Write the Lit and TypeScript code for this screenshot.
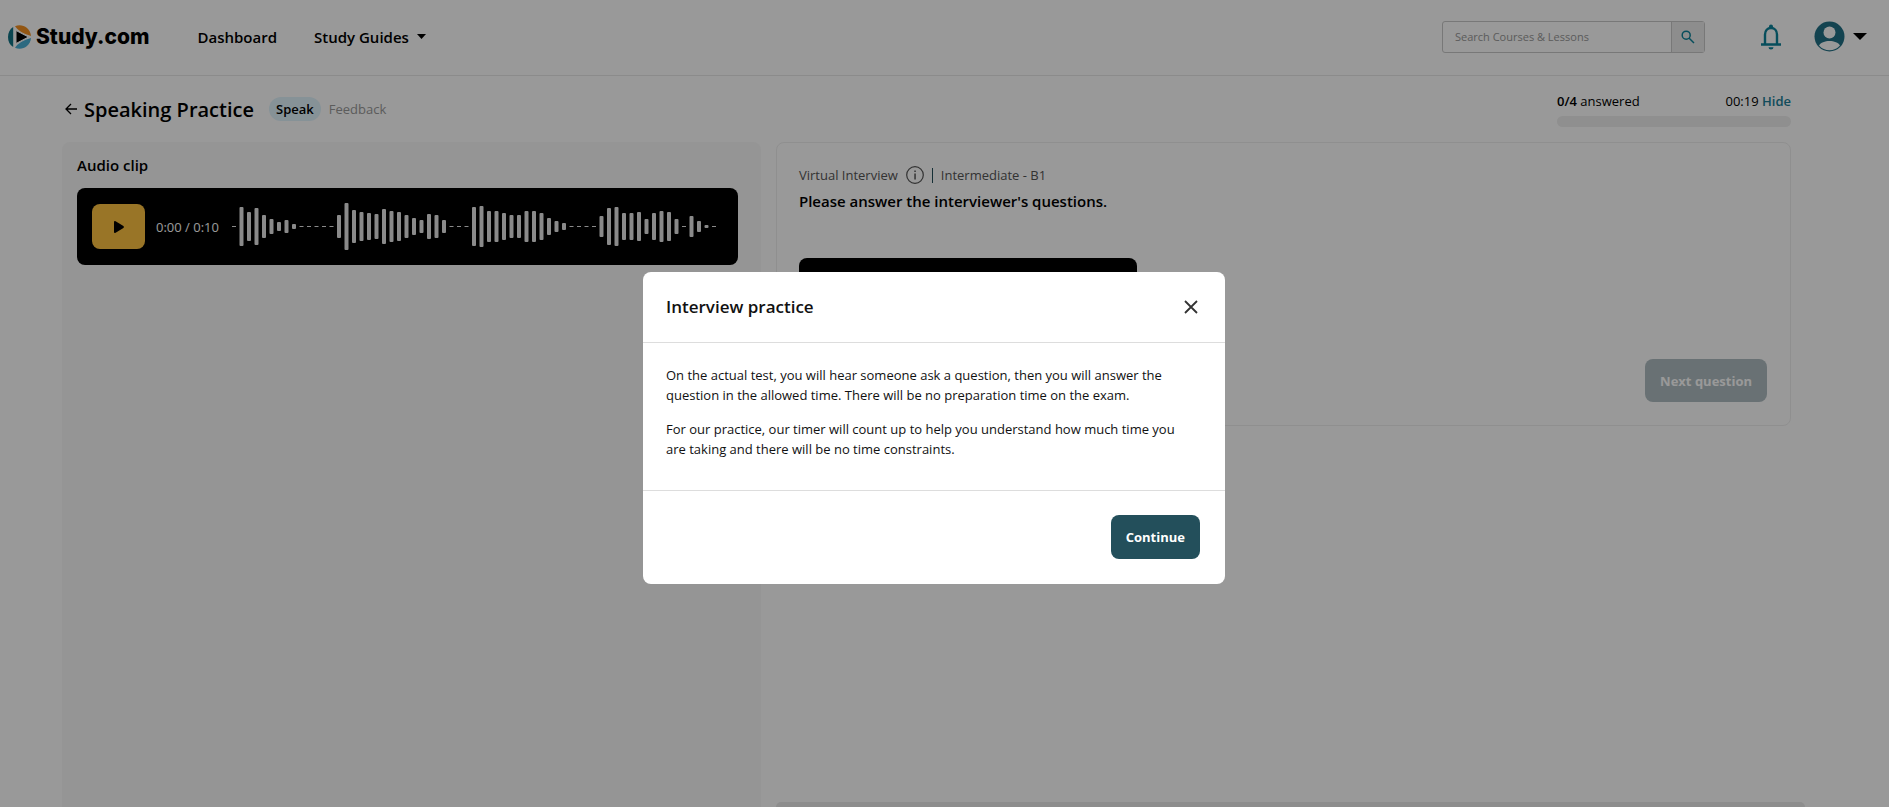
import { LitElement, html, css, svg } from "lit";
import { customElement } from "lit/decorators.js";

// Heights of the waveform bars; 0 draws a dash of silence.
const WAVE = [
  0, 39, 29, 37, 23, 15, 9, 13, 5, 0, 0, 0, 0, 0, 23, 47, 33, 29, 27, 25, 35, 31, 29, 23, 17, 13, 25, 23, 13,
  0, 0, 0, 39, 41, 31, 31, 27, 23, 23, 31, 31, 27, 17, 11, 7, 0, 0, 0, 0, 21, 37, 39, 27, 27, 29, 15, 27, 31,
  29, 15, 0, 21, 11, 3, 0,
];

@customElement("audio-clip")
class AudioClip extends LitElement {
  static styles = css`
    :host { display: block; }
    .player { display: flex; align-items: center; height: 77px; padding: 0 22px 0 15px; border-radius: 8px; background: #000; color: #fff; }
    .play { display: grid; place-items: center; width: 53px; height: 45px; padding: 0; border: 0; border-radius: 8px; background: #ffc342; }
    .time { margin-left: 11px; font-size: 13px; white-space: nowrap; }
    .wave { flex: 1; min-width: 0; height: 48px; margin-left: 13px; }
  `;
  render() {
    return html`<div class="player">
      <button class="play" aria-label="Play"><svg width="12" height="14" viewBox="0 0 12 14"><path d="M1 2.2Q1 .4 2.600 1.300L10.400 6Q11.600 7 10.400 8L2.600 12.700Q1 13.600 1 11.800z" /></svg></button>
      <span class="time">0:00 / 0:10</span>
      <svg class="wave" viewBox="0 0 484 48" preserveAspectRatio="none" aria-hidden="true">
        ${WAVE.map((h, i) => h === 0
          ? svg`<rect x=${i * 7.5} y="23" width="4" height="1" fill="#e6e6e6" />`
          : svg`<rect x=${i * 7.5} y=${23.5 - h / 2} width="4" height=${h} rx="1" fill="#e6e6e6" />`)}
      </svg>
    </div>`;
  }
}

@customElement("practice-dialog")
class PracticeDialog extends LitElement {
  static styles = css`
    :host { position: fixed; inset: 0; display: flex; align-items: flex-start; justify-content: center; padding: 272px 21px 0 0; background: rgba(0, 0, 0, 0.4); }
    .dialog { width: 582px; border-radius: 8px; background: #fff; color: #111; }
    header { display: flex; align-items: center; justify-content: space-between; height: 70px; padding: 0 27px 0 23px; border-bottom: 1px solid #ddd; }
    h2 { margin: 0; font-size: 17px; font-weight: 600; line-height: 24px; }
    .close { display: grid; padding: 0; border: 0; background: none; }
    .body { padding: 22px 32px 17px 23px; font-size: 13px; line-height: 20px; }
    p { margin: 0 0 14px; }
    footer { display: flex; justify-content: flex-end; padding: 24px 25px 25px; border-top: 1px solid #ddd; }
    .go { height: 44px; padding: 0 15px; border: 0; border-radius: 8px; background: #234f5b; color: #fff; font: 700 13px "Open Sans", sans-serif; }
  `;
  render() {
    return html`<section class="dialog" role="dialog" aria-modal="true" aria-labelledby="title">
      <header>
        <h2 id="title">Interview practice</h2>
        <button class="close" aria-label="Close"><svg width="14" height="14" viewBox="0 0 14 14" fill="none" stroke="#333" stroke-width="1.800"><path d="M1 1l12 12M13 1L1 13" /></svg></button>
      </header>
      <div class="body">
        <p>On the actual test, you will hear someone ask a question, then you will answer the question in the allowed time. There will be no preparation time on the exam.</p>
        <p>For our practice, our timer will count up to help you understand how much time you are taking and there will be no time constraints.</p>
      </div>
      <footer><button class="go">Continue</button></footer>
    </section>`;
  }
}

@customElement("site-header")
class SiteHeader extends LitElement {
  static styles = css`
    :host { display: block; }
    header { display: flex; align-items: center; height: 76px; padding: 0 22px 2px 8px; border-bottom: 1px solid #e8e8e8; box-sizing: border-box; }
    a { color: #000; text-decoration: none; }
    .logo { display: flex; align-items: center; gap: 5px; font: 800 21px "Inter", sans-serif; }
    nav { display: flex; gap: 37px; margin-left: 48px; font-size: 15px; font-weight: 600; }
    .menu { display: flex; align-items: center; gap: 8px; }
    form { display: flex; height: 32px; margin-left: auto; box-sizing: border-box; border: 1px solid #c8c8c8; border-radius: 3px; }
    input { width: 229px; box-sizing: border-box; padding: 0 12px; border: 0; border-right: 1px solid #c8c8c8; background: none; font: 11px "Open Sans", sans-serif; }
    input::placeholder { color: #999; opacity: 1; }
    button { display: flex; align-items: center; padding: 0; border: 0; background: none; }
    .search { width: 32px; justify-content: center; background: #ececec; }
    .bell { margin-left: 56px; }
    .account { gap: 8px; margin-left: 33px; }
  `;
  render() {
    return html`<header>
      <a class="logo" href="#">
        <svg width="23" height="24" viewBox="0 0 23 24"><path d="M5.200 1.900V22.100C1.800 20 0 16.500 0 12S1.800 4 5.200 1.900z" fill="#127485" /><path d="M7 1.300C13-1.500 22 1.500 23 11Q11.500 8 7 1.300z" fill="#f39021" /><path d="M7 22.700C13 25.500 22 22.500 23 13Q11.500 16 7 22.700z" fill="#4aafd6" /><path d="M8 5.500L20.500 12 8 18.500z" stroke="#fff" /></svg>
        <span>Study.com</span>
      </a>
      <nav>
        <a href="#">Dashboard</a>
        <a class="menu" href="#">Study Guides <svg width="9" height="5" viewBox="0 0 9 5"><path d="M0 0h9L4.500 5z" /></svg></a>
      </nav>
      <form role="search">
        <input type="search" aria-label="Search Courses &amp; Lessons" placeholder="Search Courses &amp; Lessons" />
        <button class="search" type="button" aria-label="Search"><svg width="14" height="14" viewBox="0 0 14 14" fill="none" stroke="#0d8299" stroke-width="1.500"><circle cx="5.200" cy="5.200" r="4" /><path d="M8.200 8.200l4.800 4.800" /></svg></button>
      </form>
      <button class="bell" aria-label="Notifications"><svg width="20" height="26" viewBox="0 0 20 26"><path d="M4 20V10.500C4 6.500 6.500 4 10 4s6 2.500 6 6.500V20M0 20.500h20" fill="none" stroke="#0d8299" stroke-width="2.400" /><path d="M8 4V2.500a2 2 0 0 1 4 0V4zM7.500 23.200h5a2.500 2.200 0 0 1-5 0z" fill="#0d8299" /></svg></button>
      <button class="account" aria-label="Account"><svg width="31" height="31" viewBox="0 0 31 31"><circle cx="15.500" cy="15.500" r="15" fill="#207085" /><circle cx="15.500" cy="11.500" r="6" fill="#fff" /><path d="M5 24.500C8 18.500 23 18.500 26 24.500A14 14 0 0 1 5 24.500z" fill="#fff" /></svg>
        <svg width="14" height="7" viewBox="0 0 14 7"><path d="M0 0h14L7 7z" /></svg></button>
    </header>`;
  }
}

@customElement("app-root")
class AppRoot extends LitElement {
  static styles = css`
    :host { display: flex; flex-direction: column; height: 100vh; overflow: hidden; font-family: "Open Sans", sans-serif; color: #000; background: #fff; }
    main { flex: 1; min-height: 0; display: flex; flex-direction: column; padding: 0 98px 0 62px; }
    .bar { display: flex; flex: none; height: 66px; justify-content: space-between; }
    .heading { display: flex; align-items: center; }
    .back { display: grid; width: 12px; margin: 0 7px 0 3px; }
    h1 { margin: 0 15px 0 0; font-size: 20px; font-weight: 600; }
    .step { padding: 2px 7px; border-radius: 12px; background: #dff3fc; font-size: 13px; line-height: 20px; font-weight: 600; }
    .next-step { margin-left: 8px; color: #999; font-size: 13px; }
    .status { width: 234px; padding-top: 15px; font-size: 13px; line-height: 20px; }
    .status b, .status a { font-weight: 600; }
    .status div { display: flex; justify-content: space-between; }
    .status a { color: #207e98; text-decoration: none; }
    progress { display: block; width: 100%; height: 11px; margin-top: 5px; appearance: none; border: 0; border-radius: 6px; overflow: hidden; background: #efefef; }
    progress::-webkit-progress-bar { background: #efefef; }
    progress::-webkit-progress-value { background: #207e98; }
    .columns { flex: 1; min-height: 0; display: grid; grid-template-columns: 698fr 1016fr; gap: 15px; }
    .clip { padding: 13px 23px 0 15px; border-radius: 8px 8px 0 0; background: #f9f9f9; }
    h3 { margin: 0 0 12px; font-size: 15px; line-height: 21px; font-weight: 600; }
    .work { display: flex; flex-direction: column; justify-content: space-between; min-width: 0; }
    .card { height: 284px; box-sizing: border-box; padding: 22px 23px 23px 22px; border: 1px solid #efefef; border-radius: 8px; display: flex; flex-direction: column; align-items: flex-start; }
    .meta { display: flex; align-items: center; height: 20px; gap: 8px; color: #555; font-size: 13px; }
    .rule { width: 1px; height: 15px; background: #234f5b; }
    .info { display: grid; padding: 0; border: 0; background: none; }
    h2 { margin: 5px 0 0; font-size: 15px; line-height: 22px; font-weight: 600; }
    .recorder { width: 338px; height: 77px; margin-top: 46px; border-radius: 8px; background: #000; }
    .next { height: 43px; margin: auto 0 0 auto; padding: 0 15px; border: 0; border-radius: 8px; background: #afbdc1; color: #fff; font: 700 13px "Open Sans", sans-serif; }
    .drawer { height: 5px; margin-right: -14px; border-radius: 8px 8px 0 0; background: #ececec; }
  `;
  render() {
    return html`<site-header></site-header>
      <main>
        <div class="bar">
          <div class="heading">
            <a class="back" href="#" aria-label="Back"><svg width="12" height="12" viewBox="0 0 12 12" fill="none" stroke="#000" stroke-width="1.300"><path d="M6 1L1 6l5 5M1 6h11" /></svg></a>
            <h1>Speaking Practice</h1>
            <span class="step">Speak</span><span class="next-step">Feedback</span>
          </div>
          <div class="status">
            <div><span><b>0/4</b> answered</span><span>00:19 <a href="#">Hide</a></span></div>
            <progress value="0" max="4" aria-label="Questions answered"></progress>
          </div>
        </div>
        <div class="columns">
          <section class="clip"><h3>Audio clip</h3><audio-clip></audio-clip></section>
          <section class="work">
            <div class="card">
              <div class="meta"><span>Virtual Interview</span><button class="info" aria-label="About this task"><svg width="18" height="18" viewBox="0 0 18 18"><circle cx="9" cy="9" r="8.300" fill="none" stroke="#555" stroke-width="1.200" /><path d="M8.300 7.500h1.500V13.500H8.300zM8.300 4.500h1.500V6H8.300z" fill="#555" /></svg></button><span class="rule"></span><span>Intermediate - B1</span></div>
              <h2>Please answer the interviewer's questions.</h2>
              <div class="recorder"></div>
              <button class="next" disabled>Next question</button>
            </div>
            <div class="drawer"></div>
          </section>
        </div>
      </main>
      <practice-dialog></practice-dialog>`;
  }
}
